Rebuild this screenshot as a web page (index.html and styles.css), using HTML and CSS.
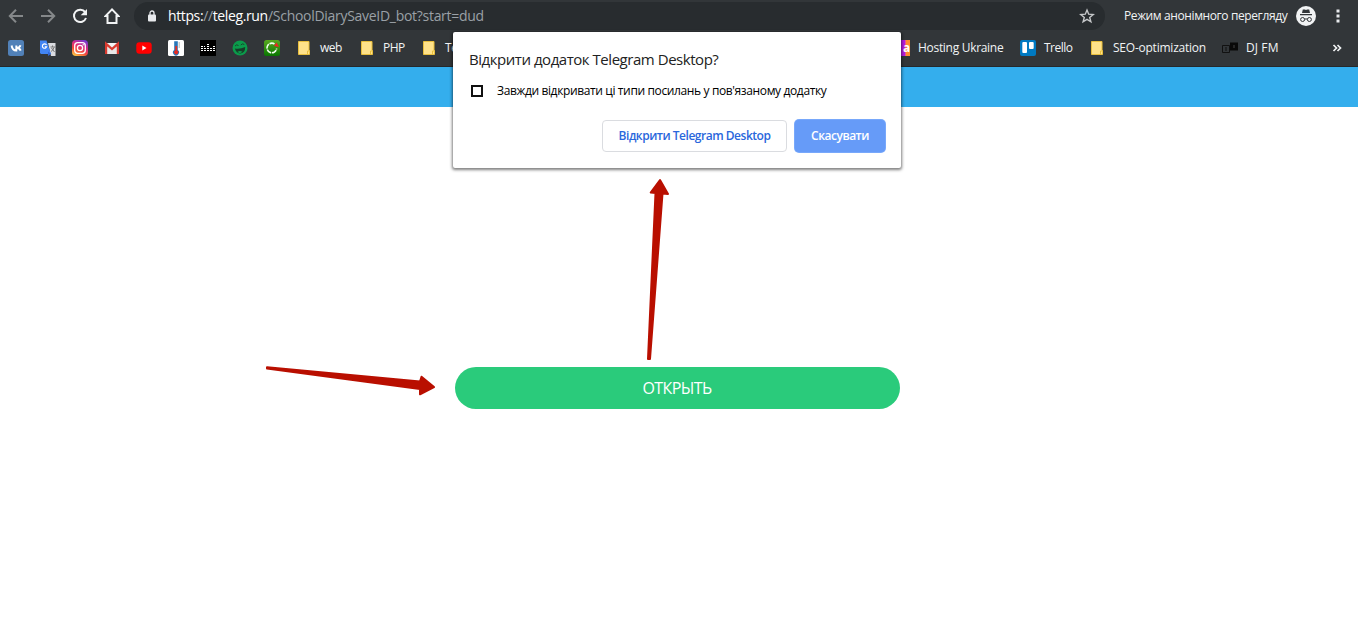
FILE: index.html
```html
<!DOCTYPE html>
<html lang="uk">
<head>
<meta charset="utf-8">
<title>teleg.run</title>
<link rel="stylesheet" href="styles.css">
</head>
<body>
<header class="chrome">
  <div class="toolbar">
    <nav class="nav">
      <svg class="nav-icon dim" viewBox="0 0 16 16"><path d="M15 8H2M8 1.800L1.800 8 8 14.200"/></svg>
      <svg class="nav-icon dim" viewBox="0 0 16 16"><path d="M1 8h13M8 1.800L14.200 8 8 14.200"/></svg>
      <svg class="nav-icon" viewBox="0 0 16 16"><path d="M13.200 4.200A6.200 6.200 0 1 0 14 10"/><path class="solid" d="M15 1v6.300H8.700z"/></svg>
      <svg class="nav-icon" viewBox="0 0 16 16"><path d="M8 1.400L1.600 8H3.500v7h9V8h1.900z"/></svg>
    </nav>
    <div class="address">
      <svg class="lock" viewBox="0 0 8 12"><path d="M2 5V3a2 2 0 0 1 4 0v2" fill="none" stroke="#e8eaed" stroke-width="1.300"/><rect y="4.500" width="8" height="7" rx="1" fill="#e8eaed"/></svg>
      <span class="url"><span class="url-host">https:<i>//</i>teleg.run</span><span class="url-path">/SchoolDiarySaveID_bot?start=dud</span></span>
      <svg class="star" viewBox="0 0 16 16"><path d="M8 2l1.700 4.200 4.500.3-3.500 2.900 1.200 4.400L8 11.400l-3.900 2.400 1.200-4.400-3.500-2.900 4.500-.3z"/></svg>
    </div>
    <span class="incognito-label">Режим анонімного перегляду</span>
    <svg class="incognito" viewBox="0 0 20 20"><circle cx="10" cy="10" r="10" fill="#f1f3f4"/><path d="M6.800 3.500h2L10 4l1.200-.5h2L14 7H6zM4 8h12v1.200H4z" fill="#323639"/><g fill="none" stroke="#323639"><circle cx="6.600" cy="13.500" r="2"/><circle cx="13.400" cy="13.500" r="2"/><path d="M8.600 13.300q1.400-1 2.800 0"/></g></svg>
    <svg class="dots" viewBox="0 0 4 14"><path d="M.5.500h3v3h-3zM.5 5.500h3v3h-3zM.5 10.500h3v3h-3z" fill="#e8eaed"/></svg>
  </div>
  <div class="bookmarks">
    <svg class="fav" viewBox="0 0 16 16"><rect width="16" height="16" rx="2.500" fill="#5181b8"/><path d="M3.600 5.500c.4 3 2 5 4.700 5V5.500M12.500 5.300C12 7 10.500 8 8.500 8c2.200 0 3.600 1 4.200 2.600" fill="none" stroke="#fff" stroke-width="1.900"/></svg>
    <svg class="fav" viewBox="0 0 16 16"><path d="M8 3h7.500v13H11z" fill="#dadce0"/><path d="M0 .5h6.500L11 14H1L0 13z" fill="#4285f4"/><path d="M11 14l-3-2.500V16z" fill="#3367d6"/><path d="M6.500 5A2.200 2.200 0 1 0 6.700 6.700H4.800" fill="none" stroke="#fff" stroke-width="1.100"/><path d="M10.500 7h4.500M12.500 5.500V7M14 7.500q-1 3-3 4M11.500 8l3 4" fill="none" stroke="#777"/></svg>
    <svg class="fav" viewBox="0 0 16 16"><defs><linearGradient id="insta" x1=".2" y1="1" x2=".7" y2="0"><stop stop-color="#ffc844"/><stop offset=".35" stop-color="#f44a3b"/><stop offset=".65" stop-color="#d82b85"/><stop offset="1" stop-color="#783bd0"/></linearGradient></defs><rect width="16" height="16" rx="4" fill="url(#insta)"/><g fill="none" stroke="#fff" stroke-width="1.300"><rect x="2.700" y="2.700" width="10.600" height="10.600" rx="3"/><circle cx="8" cy="8" r="2.600"/></g><circle cx="11.200" cy="4.800" r=".7" fill="#fff"/></svg>
    <svg class="fav" viewBox="0 0 16 16"><path d="M1 3h14v11H1z" fill="#e8e8e8"/><path d="M2.100 14V3.800L8 9l5.900-5.200V14" fill="none" stroke="#d93a2f" stroke-width="2.200"/><path d="M4 3h8L8 6.800z" fill="#f5f5f5"/></svg>
    <svg class="fav" viewBox="0 0 16 16"><rect x=".3" y="2.300" width="15.400" height="11.400" rx="3" fill="#f00"/><path d="M6.300 5.500v5L10.500 8z" fill="#fff"/></svg>
    <svg class="fav" viewBox="0 0 16 16"><rect width="16" height="16" rx="1.500" fill="#fff"/><path d="M6.200 1.300h3.600V10a3 3 0 1 1-3.600 0z" fill="#2877b8"/><path d="M7.300 6h1.800v4.500a2 2 0 1 1-1.800 0z" fill="#e22c24"/><path d="M10.500 3h1.500M10.500 5h1.500M10.500 7h1.500" stroke="#999"/></svg>
    <svg class="fav" viewBox="0 0 16 16"><path d="M0 0h16v16H0z"/><g stroke="#fff" stroke-dasharray="2 1"><path d="M1 10.500h14M1 8.500h14"/><path d="M1 6.500h2M4 6.500h1M7 6.500h2M13 6.500h2M7 4.500h2" stroke-dasharray="none"/></g></svg>
    <svg class="fav" viewBox="0 0 16 16"><circle cx="8" cy="8" r="7.500" fill="#0b9b4b"/><path d="M2.800 8.500q5.200 1 10.400-1.500 0 5.800-4.500 6.500Q4.500 13.500 2.800 8.500z" fill="#173d29"/><path d="M5.500 11.800q2.500-1.500 5 0l-2 1.200H7z" fill="#0b9b4b"/><g fill="none" stroke="#173d29" stroke-width=".9"><path d="M3 6q1.500-2 3.500-.5M8.800 5q1.500-2 3.500-.5"/></g></svg>
    <svg class="fav" viewBox="0 0 16 16"><defs><linearGradient id="leaf" x2="0" y2="1"><stop stop-color="#59aa20"/><stop offset="1" stop-color="#087600"/></linearGradient></defs><rect width="16" height="16" rx="2.500" fill="url(#leaf)"/><path d="M10.500 4A4.800 4.800 0 1 0 12.600 8.500" fill="none" stroke="#f2fff0" stroke-width="1.600" stroke-dasharray="5 .8"/><path d="M10 6l2.500-3.500L15 7z" fill="#ee2424"/></svg>
    <div class="bookmark bookmark-web"><svg class="fav" viewBox="0 0 16 16"><path d="M2.500 1.500h10.500v9h.5v4h-11z" fill="#ffe28a" stroke="#e9bf3d"/><path d="M11.500 14v-3h2" fill="none" stroke="#e9bf3d"/></svg><span>web</span></div>
    <div class="bookmark bookmark-php"><svg class="fav" viewBox="0 0 16 16"><path d="M2.500 1.500h10.500v9h.5v4h-11z" fill="#ffe28a" stroke="#e9bf3d"/><path d="M11.500 14v-3h2" fill="none" stroke="#e9bf3d"/></svg><span>PHP</span></div>
    <div class="bookmark bookmark-te"><svg class="fav" viewBox="0 0 16 16"><path d="M2.500 1.500h10.500v9h.5v4h-11z" fill="#ffe28a" stroke="#e9bf3d"/><path d="M11.500 14v-3h2" fill="none" stroke="#e9bf3d"/></svg><span>Te</span></div>
    <div class="bookmark bookmark-hosting"><span class="fav host-icon">a</span><span>Hosting Ukraine</span></div>
    <div class="bookmark bookmark-trello"><svg class="fav" viewBox="0 0 16 16"><rect width="16" height="16" rx="2" fill="#0079c1"/><rect x="2.300" y="2" width="4.700" height="11" rx="1" fill="#fff"/><rect x="9" y="2" width="4.700" height="7" rx="1" fill="#fff"/></svg><span>Trello</span></div>
    <div class="bookmark bookmark-seo"><svg class="fav" viewBox="0 0 16 16"><path d="M2.500 1.500h10.500v9h.5v4h-11z" fill="#ffe28a" stroke="#e9bf3d"/><path d="M11.500 14v-3h2" fill="none" stroke="#e9bf3d"/></svg><span>SEO-optimization</span></div>
    <div class="bookmark bookmark-dj"><svg class="fav" viewBox="0 0 16 16"><path d="M.5 5.500h7v7h-7z" fill="none" stroke="#111"/><path d="M8 2.500h8v8H8z" fill="#090909"/><path d="M4 7v4" stroke="#111"/><path d="M12 5v3" stroke="#444"/></svg><span>DJ FM</span></div>
    <svg class="more" viewBox="0 0 10 8"><path d="M1.500 1l3 3-3 3M5.500 1l3 3-3 3" fill="none" stroke="#f1f3f4" stroke-width="1.700"/></svg>
  </div>
</header>
<div class="banner"></div>
<main class="page"><button class="open">ОТКРЫТЬ</button></main>
<section class="dialog">
  <h1 class="dialog-title">Відкрити додаток Telegram Desktop?</h1>
  <div class="remember"><span class="checkbox"></span><span class="remember-text">Завжди відкривати ці типи посилань у пов'язаному додатку</span></div>
  <div class="actions"><button class="action launch">Відкрити Telegram Desktop</button><button class="action cancel">Скасувати</button></div>
</section>
<svg class="arrows" viewBox="0 0 1358 618"><g fill="#b90f00" stroke="#b90f00" stroke-linejoin="round"><path stroke-width="2" d="M267 367.300L420 381.500 421.500 376.800 434 387 420 394.300 420 389 267 368.500z"/><path stroke-width="2" d="M648 359L655.500 193 650.700 192.500 660 180 668 194 662.500 193.500 650 359z"/></g></svg>
</body>
</html>
```

FILE: styles.css
```css
* { box-sizing: border-box; }
body { margin: 0; height: 618px; overflow: hidden; background: #fff; font: 12px/16px "Open Sans", "Noto Sans", sans-serif; }
button { font: inherit; padding: 0; border: 0; white-space: nowrap; }
svg { display: block; flex: none; }
.chrome { height: 67px; background: #323639; border-bottom: 1px solid #25282b; color: #f1f3f4; }
.toolbar { display: flex; align-items: center; height: 32px; padding: 0 18px 0 8px; }
.nav { display: flex; gap: 16px; }
.nav-icon { width: 16px; height: 16px; fill: none; stroke: #f1f3f4; stroke-width: 2; }
.nav-icon.dim { stroke: #85888a; }
.nav-icon .solid { fill: #f1f3f4; stroke: none; }
.address { display: flex; align-items: center; width: 971px; height: 28px; margin-left: 14px; padding: 0 10px 0 14px; border-radius: 14px; background: #282c2f; }
.lock { width: 8px; height: 12px; }
.url { display: flex; margin-left: 12px; font-size: 14px; line-height: 20px; white-space: nowrap; color: #9aa0a6; }
.url-host { width: 100px; color: #fff; letter-spacing: -.38px; }
.url i { font-style: normal; color: #9aa0a6; }
.url-path { letter-spacing: -.29px; }
.star { width: 16px; height: 16px; margin-left: auto; fill: none; stroke: #c5c7c9; stroke-width: 1.400; }
.incognito-label { width: 172px; margin-left: 19px; letter-spacing: -.39px; white-space: nowrap; }
.incognito { width: 20px; height: 20px; }
.dots { width: 4px; height: 14px; margin-left: auto; }
.bookmarks { display: flex; align-items: center; gap: 16px; height: 32px; padding: 0 16px 0 8px; }
.fav { flex: none; width: 16px; height: 16px; }
.bookmark { display: flex; flex: none; gap: 8px; letter-spacing: -.3px; white-space: nowrap; }
.bookmark-web { width: 47px; letter-spacing: -.5px; }
.bookmark-php { width: 46px; letter-spacing: -.5px; }
.bookmark-te { width: 457px; }
.bookmark-hosting { width: 110px; }
.bookmark-trello { width: 53px; letter-spacing: -.5px; }
.bookmark-seo { width: 117px; letter-spacing: -.23px; }
.bookmark-dj { letter-spacing: .1px; }
.host-icon { background: linear-gradient(90deg, #b51ee0 11px, #e95590 11px 12px, #ff8b30 12px); color: #fff; font-weight: 700; text-align: right; }
.more { width: 10px; height: 8px; margin-left: auto; }
.banner { height: 40px; background: #34aeed; }
.page { display: flex; justify-content: center; padding: 260px 3px 0 0; }
.open { width: 445px; height: 42px; padding-right: 1px; border-radius: 21px; background: #2acb7b; color: #fff; font-size: 16px; letter-spacing: -.6px; }
.dialog { position: absolute; left: 453px; top: 32px; width: 448px; height: 136px; padding: 17px 16px 16px; border-radius: 2px; background: #fff; box-shadow: 0 1px 3px 1px rgba(0, 0, 0, .5); color: #222; }
.dialog-title { margin: 0; font-size: 15px; font-weight: 400; line-height: 20px; letter-spacing: -.46px; white-space: nowrap; }
.remember { display: flex; align-items: center; gap: 14px; margin: 14px 0 0 2px; color: #000; }
.checkbox { width: 12px; height: 12px; border: 2px solid #111; }
.remember-text { letter-spacing: -.37px; white-space: nowrap; }
.actions { display: flex; justify-content: flex-end; gap: 8px; margin-top: 21px; }
.action { height: 32px; border-radius: 4px; font-weight: 600; letter-spacing: -.48px; }
.launch { width: 185px; border: 1px solid #dadce0; background: #fff; color: #2a67dc; }
.cancel { width: 90px; background: #669bf8; color: #fff; box-shadow: 0 0 0 1px #78a8fb; }
.arrows { position: absolute; left: 0; top: 0; width: 1358px; height: 618px; pointer-events: none; }
```
